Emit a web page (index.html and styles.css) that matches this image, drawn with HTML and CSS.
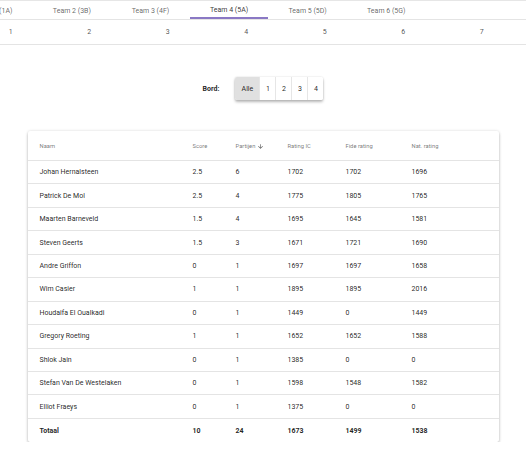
FILE: index.html
```html
<!DOCTYPE html>
<html>
<head>
<meta charset="utf-8">
<link rel="stylesheet" href="styles.css">
</head>
<body>
<div class="tabs">
  <div class="tab">Team 1 (1A)</div>
  <div class="tab">Team 2 (3B)</div>
  <div class="tab">Team 3 (4F)</div>
  <div class="tab active">Team 4 (5A)</div>
  <div class="tab">Team 5 (5D)</div>
  <div class="tab">Team 6 (5G)</div>
</div>
<div class="rounds">
  <div class="round">1</div>
  <div class="round">2</div>
  <div class="round">3</div>
  <div class="round">4</div>
  <div class="round">5</div>
  <div class="round">6</div>
  <div class="round">7</div>
</div>
<div class="bord">
  <span class="bord-label">Bord:</span>
  <div class="toggle">
    <div class="btn sel">Alle</div>
    <div class="btn">1</div>
    <div class="btn">2</div>
    <div class="btn">3</div>
    <div class="btn">4</div>
  </div>
</div>
<div class="card">
  <div class="row head">
    <div>Naam</div><div>Score</div>
    <div class="sort">Partijen <svg class="arrow" viewBox="0 0 24 24"><path d="M20 12l-1.41-1.41L13 16.17V4h-2v12.17l-5.58-5.59L4 12l8 8 8-8z"/></svg></div>
    <div>Rating IC</div><div>Fide rating</div><div>Nat. rating</div>
  </div>
  <div class="row"><div>Johan Hernalsteen</div><div>2.5</div><div>6</div><div>1702</div><div>1702</div><div>1696</div></div>
  <div class="row"><div>Patrick De Mol</div><div>2.5</div><div>4</div><div>1775</div><div>1805</div><div>1765</div></div>
  <div class="row"><div>Maarten Barneveld</div><div>1.5</div><div>4</div><div>1695</div><div>1645</div><div>1581</div></div>
  <div class="row"><div>Steven Geerts</div><div>1.5</div><div>3</div><div>1671</div><div>1721</div><div>1690</div></div>
  <div class="row"><div>Andre Griffon</div><div>0</div><div>1</div><div>1697</div><div>1697</div><div>1658</div></div>
  <div class="row"><div>Wim Casier</div><div>1</div><div>1</div><div>1895</div><div>1895</div><div>2016</div></div>
  <div class="row"><div>Houdaifa El Oualkadi</div><div>0</div><div>1</div><div>1449</div><div>0</div><div>1449</div></div>
  <div class="row"><div>Gregory Roeting</div><div>1</div><div>1</div><div>1652</div><div>1652</div><div>1588</div></div>
  <div class="row"><div>Shlok Jain</div><div>0</div><div>1</div><div>1385</div><div>0</div><div>0</div></div>
  <div class="row"><div>Stefan Van De Westelaken</div><div>0</div><div>1</div><div>1598</div><div>1548</div><div>1582</div></div>
  <div class="row"><div>Elliot Fraeys</div><div>0</div><div>1</div><div>1375</div><div>0</div><div>0</div></div>
  <div class="row total"><div>Totaal</div><div>10</div><div>24</div><div>1673</div><div>1499</div><div>1538</div></div>
</div>
</body>
</html>
```
FILE: styles.css
```css
* { box-sizing: border-box; }
html, body { margin: 0; padding: 0; background: #fff; }
body {
  font-family: Roboto, "Liberation Sans", sans-serif;
  color: rgba(0,0,0,0.87);
  width: 526px;
  overflow: hidden;
}
.tabs {
  display: flex;
  height: 20px;
  border-top: 1px solid #e6e6e6;
  border-bottom: 1px solid #e4e4e4;
  margin-left: -46px;
  width: 600px;
}
.tab {
  flex: 0 0 78.6px;
  display: flex;
  align-items: center;
  justify-content: center;
  font-size: 7px;
  color: rgba(0,0,0,0.62);
  white-space: nowrap;
  padding-top: 1px;
}
.tab.active {
  color: rgba(0,0,0,0.8);
  border-bottom: 2px solid #8a78c4;
}
.rounds {
  display: flex;
  height: 25px;
  border-bottom: 1px solid #e4e4e4;
  margin-left: -28.5px;
  width: 560px;
}
.round {
  flex: 0 0 78.5px;
  display: flex;
  align-items: center;
  justify-content: center;
  font-size: 7px;
  color: rgba(0,0,0,0.7);
}
.bord {
  display: flex;
  justify-content: center;
  align-items: center;
  gap: 16px;
  margin-top: 32px;
}
.bord-label {
  font-size: 7px;
  font-weight: 700;
}
.toggle {
  display: flex;
  height: 23px;
  border-radius: 2px;
  box-shadow: 0 2px 3px rgba(0,0,0,0.28), 0 0 2px rgba(0,0,0,0.14);
  overflow: hidden;
}
.btn {
  width: 16px;
  display: flex;
  align-items: center;
  justify-content: center;
  font-size: 7px;
  border-left: 1px solid #e6e6e6;
  background: #fff;
}
.btn.sel {
  width: 24px;
  border-left: none;
  background: #e0e0e0;
}
.card {
  width: 471px;
  margin: 31px auto 0;
  box-shadow: 0 2px 3px rgba(0,0,0,0.22), 0 0 3px rgba(0,0,0,0.14);
  border-radius: 2px;
  background: #fff;
}
.row {
  display: grid;
  grid-template-columns: 153px 43px 52px 58px 66px 1fr;
  padding-left: 12px;
  height: 23.45px;
  align-items: center;
  font-size: 7px;
  border-bottom: 1px solid #e4e4e4;
  white-space: nowrap;
}
.row.head {
  height: 30px;
  padding-top: 1px;
  font-size: 5.8px;
  color: rgba(0,0,0,0.56);
}
.row.total {
  font-weight: 700;
  border-bottom: none;
}
.sort {
  display: flex;
  align-items: center;
  gap: 2px;
}
.arrow {
  width: 7px;
  height: 7px;
  fill: rgba(0,0,0,0.7);
}
```
